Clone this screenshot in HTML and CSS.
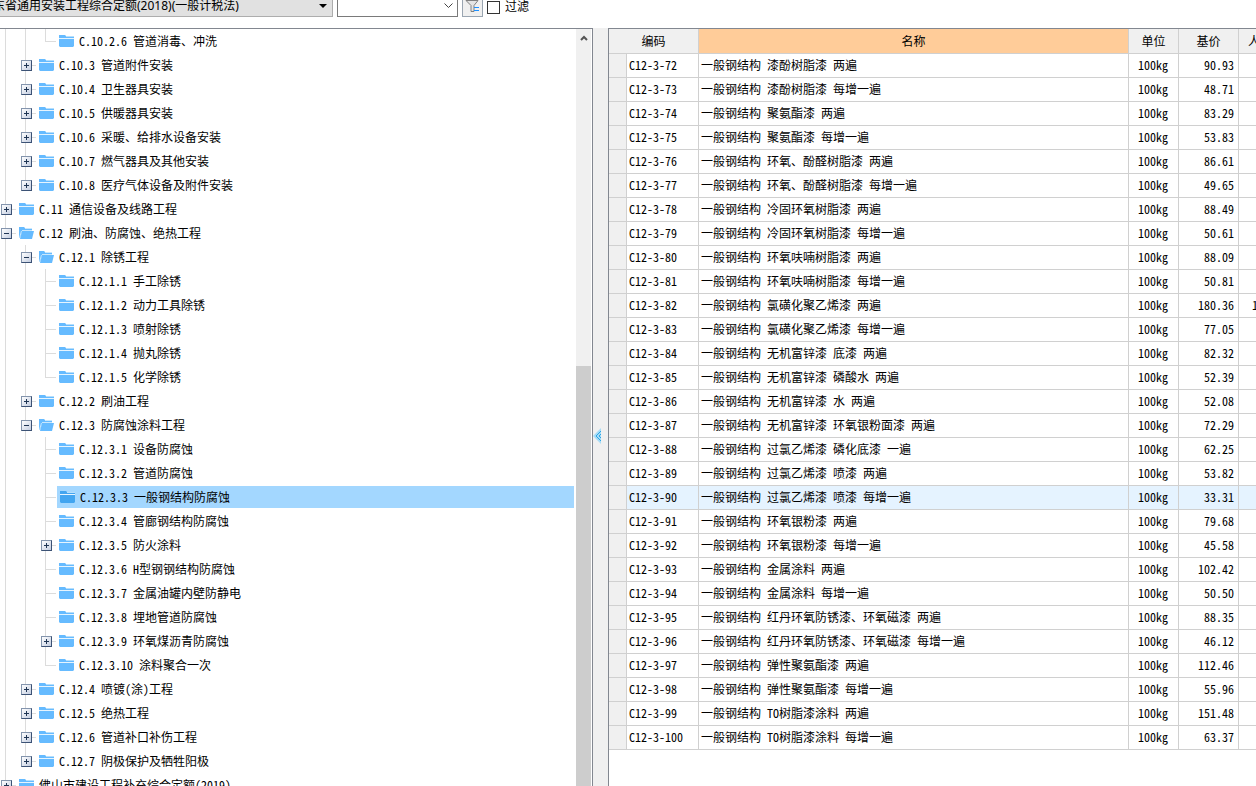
FILE: index.html
```html
<!DOCTYPE html>
<html lang="zh-CN">
<head>
<meta charset="utf-8">
<title>定额查询</title>
<link rel="stylesheet" href="styles.css">
</head>
<body>
<svg class="sprite" aria-hidden="true">
<symbol id="folder" viewBox="0 0 15 12"><path d="M0 0h6l1 1v1H0z" fill="currentColor"/><path d="M7 1h8v1H7z" fill="#b5defc"/><path d="M0 2h15v1H0z" fill="currentColor"/><path d="M0 3h15v1H0z" fill="#e6f4fe"/><path d="M0 4h15v7l-1 1H1l-1-1z" fill="currentColor"/></symbol>
<symbol id="open" viewBox="0 0 15 12"><path d="M0 0h5l1 1h7v3H3L1 11H0z" fill="currentColor"/><path d="M6 1h7v1H6zM3 3h10v1H3zM3 4L1 11H0L2 4z" fill="#c9e7fd"/><path d="M3 4h12l-2 8H1z" fill="currentColor"/></symbol>
</svg>
<form class="toolbar">
<select class="combo book" aria-label="定额"><option>广东省通用安装工程综合定额(2018)(一般计税法)</option></select>
<select class="combo search" aria-label="查询"><option></option></select>
<button class="filter" type="button" aria-label="过滤条件"><svg viewBox="0 0 15 14" width="15" height="14"><path d="M1 1.500h12L9 6.500v6H6v-6z" fill="#e4e4e4" stroke="#808080"/><path d="M9 8.500h5M9 11.500h5" stroke="#1e90ff"/></svg></button>
<label class="check"><input type="checkbox">过滤</label>
</form>
<main class="panes">
<nav class="side" aria-label="章节">
<ul class="tree">
<li><ul>
  <li><ul>
    <li><div class="row"><span class="item"><svg class="ico"><use href="#folder"/></svg>C.10.2.6 管道消毒、冲洗</span></div></li>
  </ul></li>
  <li><div class="row"><button class="tg" aria-label="展开"></button><span class="item"><svg class="ico"><use href="#folder"/></svg>C.10.3 管道附件安装</span></div></li>
  <li><div class="row"><button class="tg" aria-label="展开"></button><span class="item"><svg class="ico"><use href="#folder"/></svg>C.10.4 卫生器具安装</span></div></li>
  <li><div class="row"><button class="tg" aria-label="展开"></button><span class="item"><svg class="ico"><use href="#folder"/></svg>C.10.5 供暖器具安装</span></div></li>
  <li><div class="row"><button class="tg" aria-label="展开"></button><span class="item"><svg class="ico"><use href="#folder"/></svg>C.10.6 采暖、给排水设备安装</span></div></li>
  <li><div class="row"><button class="tg" aria-label="展开"></button><span class="item"><svg class="ico"><use href="#folder"/></svg>C.10.7 燃气器具及其他安装</span></div></li>
  <li><div class="row"><button class="tg" aria-label="展开"></button><span class="item"><svg class="ico"><use href="#folder"/></svg>C.10.8 医疗气体设备及附件安装</span></div></li>
</ul></li>
<li><div class="row"><button class="tg" aria-label="展开"></button><span class="item"><svg class="ico"><use href="#folder"/></svg>C.11 通信设备及线路工程</span></div></li>
<li><div class="row"><button class="tg minus" aria-label="折叠"></button><span class="item"><svg class="ico"><use href="#open"/></svg>C.12 刷油、防腐蚀、绝热工程</span></div>
<ul>
  <li><div class="row"><button class="tg minus" aria-label="折叠"></button><span class="item"><svg class="ico"><use href="#open"/></svg>C.12.1 除锈工程</span></div>
  <ul>
    <li><div class="row"><span class="item"><svg class="ico"><use href="#folder"/></svg>C.12.1.1 手工除锈</span></div></li>
    <li><div class="row"><span class="item"><svg class="ico"><use href="#folder"/></svg>C.12.1.2 动力工具除锈</span></div></li>
    <li><div class="row"><span class="item"><svg class="ico"><use href="#folder"/></svg>C.12.1.3 喷射除锈</span></div></li>
    <li><div class="row"><span class="item"><svg class="ico"><use href="#folder"/></svg>C.12.1.4 抛丸除锈</span></div></li>
    <li><div class="row"><span class="item"><svg class="ico"><use href="#folder"/></svg>C.12.1.5 化学除锈</span></div></li>
  </ul></li>
  <li><div class="row"><button class="tg" aria-label="展开"></button><span class="item"><svg class="ico"><use href="#folder"/></svg>C.12.2 刷油工程</span></div></li>
  <li><div class="row"><button class="tg minus" aria-label="折叠"></button><span class="item"><svg class="ico"><use href="#open"/></svg>C.12.3 防腐蚀涂料工程</span></div>
  <ul>
    <li><div class="row"><span class="item"><svg class="ico"><use href="#folder"/></svg>C.12.3.1 设备防腐蚀</span></div></li>
    <li><div class="row"><span class="item"><svg class="ico"><use href="#folder"/></svg>C.12.3.2 管道防腐蚀</span></div></li>
    <li><div class="row"><span class="item selected"><svg class="ico"><use href="#folder"/></svg>C.12.3.3 一般钢结构防腐蚀</span></div></li>
    <li><div class="row"><span class="item"><svg class="ico"><use href="#folder"/></svg>C.12.3.4 管廊钢结构防腐蚀</span></div></li>
    <li><div class="row"><button class="tg" aria-label="展开"></button><span class="item"><svg class="ico"><use href="#folder"/></svg>C.12.3.5 防火涂料</span></div></li>
    <li><div class="row"><span class="item"><svg class="ico"><use href="#folder"/></svg>C.12.3.6 H型钢钢结构防腐蚀</span></div></li>
    <li><div class="row"><span class="item"><svg class="ico"><use href="#folder"/></svg>C.12.3.7 金属油罐内壁防静电</span></div></li>
    <li><div class="row"><span class="item"><svg class="ico"><use href="#folder"/></svg>C.12.3.8 埋地管道防腐蚀</span></div></li>
    <li><div class="row"><button class="tg" aria-label="展开"></button><span class="item"><svg class="ico"><use href="#folder"/></svg>C.12.3.9 环氧煤沥青防腐蚀</span></div></li>
    <li><div class="row"><span class="item"><svg class="ico"><use href="#folder"/></svg>C.12.3.10 涂料聚合一次</span></div></li>
  </ul></li>
  <li><div class="row"><button class="tg" aria-label="展开"></button><span class="item"><svg class="ico"><use href="#folder"/></svg>C.12.4 喷镀(涂)工程</span></div></li>
  <li><div class="row"><button class="tg" aria-label="展开"></button><span class="item"><svg class="ico"><use href="#folder"/></svg>C.12.5 绝热工程</span></div></li>
  <li><div class="row"><button class="tg" aria-label="展开"></button><span class="item"><svg class="ico"><use href="#folder"/></svg>C.12.6 管道补口补伤工程</span></div></li>
  <li><div class="row"><button class="tg" aria-label="展开"></button><span class="item"><svg class="ico"><use href="#folder"/></svg>C.12.7 阴极保护及牺牲阳极</span></div></li>
</ul></li>
<li><div class="row"><button class="tg" aria-label="展开"></button><span class="item"><svg class="ico"><use href="#folder"/></svg>佛山市建设工程补充综合定额(2019)</span></div></li>
</ul>
<div class="scroll"><button class="up" aria-label="向上滚动"><svg viewBox="0 0 8 6" width="8" height="6"><path d="M1 5l3-3 3 3" fill="none" stroke="#555" stroke-width="2"/></svg></button><div class="thumb"></div></div>
</nav>
<div class="splitter"><button class="fold" aria-label="收起"><svg viewBox="0 0 8 16" width="8" height="16"><path d="M8 0v16L0 8z" fill="#a5dcf7"/><path d="M8 3L3 8l5 5M8 6L6 8l2 2" fill="none" stroke="#2fa6e6"/></svg></button></div>
<section class="grid">
<table>
<colgroup><col class="c-mark"><col class="c-code"><col class="c-name"><col class="c-unit"><col class="c-price"><col class="c-more"></colgroup>
<thead><tr><th colspan="2">编码</th><th class="sorted">名称</th><th>单位</th><th>基价</th><th class="more">人</th></tr></thead>
<tbody>
<tr><th></th><td>C12-3-72</td><td>一般钢结构 漆酚树脂漆 两遍</td><td>100kg</td><td>90.93</td><td></td></tr>
<tr><th></th><td>C12-3-73</td><td>一般钢结构 漆酚树脂漆 每增一遍</td><td>100kg</td><td>48.71</td><td></td></tr>
<tr><th></th><td>C12-3-74</td><td>一般钢结构 聚氨酯漆 两遍</td><td>100kg</td><td>83.29</td><td></td></tr>
<tr><th></th><td>C12-3-75</td><td>一般钢结构 聚氨酯漆 每增一遍</td><td>100kg</td><td>53.83</td><td></td></tr>
<tr><th></th><td>C12-3-76</td><td>一般钢结构 环氧、酚醛树脂漆 两遍</td><td>100kg</td><td>86.61</td><td></td></tr>
<tr><th></th><td>C12-3-77</td><td>一般钢结构 环氧、酚醛树脂漆 每增一遍</td><td>100kg</td><td>49.65</td><td></td></tr>
<tr><th></th><td>C12-3-78</td><td>一般钢结构 冷固环氧树脂漆 两遍</td><td>100kg</td><td>88.49</td><td></td></tr>
<tr><th></th><td>C12-3-79</td><td>一般钢结构 冷固环氧树脂漆 每增一遍</td><td>100kg</td><td>50.61</td><td></td></tr>
<tr><th></th><td>C12-3-80</td><td>一般钢结构 环氧呋喃树脂漆 两遍</td><td>100kg</td><td>88.09</td><td></td></tr>
<tr><th></th><td>C12-3-81</td><td>一般钢结构 环氧呋喃树脂漆 每增一遍</td><td>100kg</td><td>50.81</td><td></td></tr>
<tr><th></th><td>C12-3-82</td><td>一般钢结构 氯磺化聚乙烯漆 两遍</td><td>100kg</td><td>180.36</td><td>1</td></tr>
<tr><th></th><td>C12-3-83</td><td>一般钢结构 氯磺化聚乙烯漆 每增一遍</td><td>100kg</td><td>77.05</td><td></td></tr>
<tr><th></th><td>C12-3-84</td><td>一般钢结构 无机富锌漆 底漆 两遍</td><td>100kg</td><td>82.32</td><td></td></tr>
<tr><th></th><td>C12-3-85</td><td>一般钢结构 无机富锌漆 磷酸水 两遍</td><td>100kg</td><td>52.39</td><td></td></tr>
<tr><th></th><td>C12-3-86</td><td>一般钢结构 无机富锌漆 水 两遍</td><td>100kg</td><td>52.08</td><td></td></tr>
<tr><th></th><td>C12-3-87</td><td>一般钢结构 无机富锌漆 环氧银粉面漆 两遍</td><td>100kg</td><td>72.29</td><td></td></tr>
<tr><th></th><td>C12-3-88</td><td>一般钢结构 过氯乙烯漆 磷化底漆 一遍</td><td>100kg</td><td>62.25</td><td></td></tr>
<tr><th></th><td>C12-3-89</td><td>一般钢结构 过氯乙烯漆 喷漆 两遍</td><td>100kg</td><td>53.82</td><td></td></tr>
<tr class="current"><th></th><td>C12-3-90</td><td>一般钢结构 过氯乙烯漆 喷漆 每增一遍</td><td>100kg</td><td>33.31</td><td></td></tr>
<tr><th></th><td>C12-3-91</td><td>一般钢结构 环氧银粉漆 两遍</td><td>100kg</td><td>79.68</td><td></td></tr>
<tr><th></th><td>C12-3-92</td><td>一般钢结构 环氧银粉漆 每增一遍</td><td>100kg</td><td>45.58</td><td></td></tr>
<tr><th></th><td>C12-3-93</td><td>一般钢结构 金属涂料 两遍</td><td>100kg</td><td>102.42</td><td></td></tr>
<tr><th></th><td>C12-3-94</td><td>一般钢结构 金属涂料 每增一遍</td><td>100kg</td><td>50.50</td><td></td></tr>
<tr><th></th><td>C12-3-95</td><td>一般钢结构 红丹环氧防锈漆、环氧磁漆 两遍</td><td>100kg</td><td>88.35</td><td></td></tr>
<tr><th></th><td>C12-3-96</td><td>一般钢结构 红丹环氧防锈漆、环氧磁漆 每增一遍</td><td>100kg</td><td>46.12</td><td></td></tr>
<tr><th></th><td>C12-3-97</td><td>一般钢结构 弹性聚氨酯漆 两遍</td><td>100kg</td><td>112.46</td><td></td></tr>
<tr><th></th><td>C12-3-98</td><td>一般钢结构 弹性聚氨酯漆 每增一遍</td><td>100kg</td><td>55.96</td><td></td></tr>
<tr><th></th><td>C12-3-99</td><td>一般钢结构 TO树脂漆涂料 两遍</td><td>100kg</td><td>151.48</td><td></td></tr>
<tr><th></th><td>C12-3-100</td><td>一般钢结构 TO树脂漆涂料 每增一遍</td><td>100kg</td><td>63.37</td><td></td></tr>
</tbody>
</table>
</section>
</main>
</body>
</html>
```
FILE: styles.css
```css
* { box-sizing: border-box; }

body {
  margin: 0;
  height: 100vh;
  display: flex;
  flex-direction: column;
  overflow: hidden;
  background: #fff;
  color: #000;
  font: 12px/16px "Noto Sans Mono CJK SC", "Noto Sans CJK SC", monospace;
}

button { padding: 0; border: 0; background: none; display: grid; place-items: center; }
svg { display: block; }
.sprite { display: none; }

/* Toolbar */
.toolbar {
  flex: none;
  height: 28px;
  padding-bottom: 11px;
  display: flex;
  align-items: flex-end;
  font-family: "Noto Sans", "Noto Sans CJK SC", sans-serif;
}
.combo {
  appearance: none;
  height: 22px;
  margin: 0;
  border: 1px solid #adadad;
  border-radius: 0;
  color: #000;
  font: inherit;
}
.book {
  width: 357px;
  margin-left: -24px;
  padding: 0 4px;
  background: #e1e1e1 url("data:image/svg+xml,%3Csvg xmlns='http://www.w3.org/2000/svg' width='8' height='4'%3E%3Cpath d='M0 0h8L4 4z'/%3E%3C/svg%3E") no-repeat right 5px center;
}
.search {
  width: 121px;
  margin-left: 4px;
  border-color: #7a7a7a;
  background: #fff url("data:image/svg+xml,%3Csvg xmlns='http://www.w3.org/2000/svg' width='9' height='6'%3E%3Cpath d='M.5.5l4 4 4-4' fill='none' stroke='%23444'/%3E%3C/svg%3E") no-repeat right 4px center;
}
.filter {
  width: 21px;
  height: 22px;
  margin-left: 4px;
  border: 1px solid #9aa5b1;
  background: #f0f0f0;
}
.check { display: flex; align-items: center; gap: 5px; height: 20px; margin-left: 4px; }
.check input {
  appearance: none;
  width: 13px;
  height: 13px;
  margin: 0;
  border: 1px solid #333;
  background: #fff;
}

.panes { flex: 1; min-height: 0; display: flex; }

/* Chapter tree */
.side {
  flex: none;
  width: 593px;
  display: flex;
  border: 1px solid #828790;
  border-width: 1px 1px 0 0;
  overflow: hidden;
}
.tree { flex: 1; min-width: 0; margin: 0; padding: 0 2px 0 0; list-style: none; }
.tree ul { margin: 0; padding: 0 0 0 20px; list-style: none; }
.tree li { background: linear-gradient(#dcdcdc, #dcdcdc) 5px 0 / 1px 100% no-repeat; }
.tree ul > li:last-child { background-size: 1px 12px; }
.row {
  display: flex;
  align-items: center;
  height: 24px;
  padding-left: 17px;
  background: linear-gradient(#dcdcdc, #dcdcdc) 5px 12px / 11px 1px no-repeat;
}
.row:has(.tg) { padding-left: 1px; }
.tg {
  flex: none;
  width: 11px;
  height: 11px;
  margin-right: 5px;
  border: 1px solid #3c5275;
  border-top-color: #8495ad;
  border-left-color: #8495ad;
  background:
    linear-gradient(#1f3554, #1f3554) center / 5px 1px no-repeat,
    linear-gradient(#1f3554, #1f3554) center / 1px 5px no-repeat,
    linear-gradient(135deg, #fff, #c3cde0);
}
.tg.minus {
  background:
    linear-gradient(#1f3554, #1f3554) center / 5px 1px no-repeat,
    linear-gradient(135deg, #fff, #c3cde0);
}
.item {
  flex: 1;
  height: 22px;
  padding-left: 2px;
  display: flex;
  align-items: center;
  gap: 5px;
  white-space: nowrap;
}
.ico { flex: none; width: 15px; height: 12px; color: #66bbff; }
.selected { padding-left: 3px; background: #a3d7ff; }
.selected .ico { color: #42a5f0; }

.scroll {
  flex: none;
  width: 15px;
  margin-right: 1px;
  display: grid;
  grid-template-rows: 17px 16fr 21fr;
  background: #f0f0f0;
}
.thumb { grid-row: 3; background: #cdcdcd; }

.splitter { flex: none; width: 15px; padding-top: 400px; background: #f0f0f0; }

/* Quota grid */
.grid { flex: 1; min-width: 0; border: 1px solid #828790; border-width: 1px 0 0 1px; overflow: hidden; }
table { width: 690px; table-layout: fixed; border-collapse: separate; border-spacing: 0; }
.c-mark { width: 18px; }
.c-code { width: 72px; }
.c-name { width: 430px; }
.c-unit { width: 50px; }
.c-price { width: 60px; }
.c-more { width: 60px; }
th, td {
  height: 24px;
  padding: 0 3px 2px 2px;
  border: 1px solid #d0d0d0;
  border-width: 0 1px 1px 0;
  font-weight: 400;
  line-height: 16px;
  text-align: left;
  white-space: nowrap;
}
th { background: #f0f0f0; }
thead th { height: 25px; padding: 0 3px; text-align: center; font-family: "Noto Sans CJK SC", sans-serif; }
thead .sorted { background: #ffcc99; }
thead .more { padding-left: 9px; text-align: left; }
td:nth-child(4) { text-align: center; }
td:nth-child(5) { padding-right: 4px; text-align: right; }
td:nth-child(6) { padding-left: 13px; }
.current td { background: #e5f3ff; }
```
